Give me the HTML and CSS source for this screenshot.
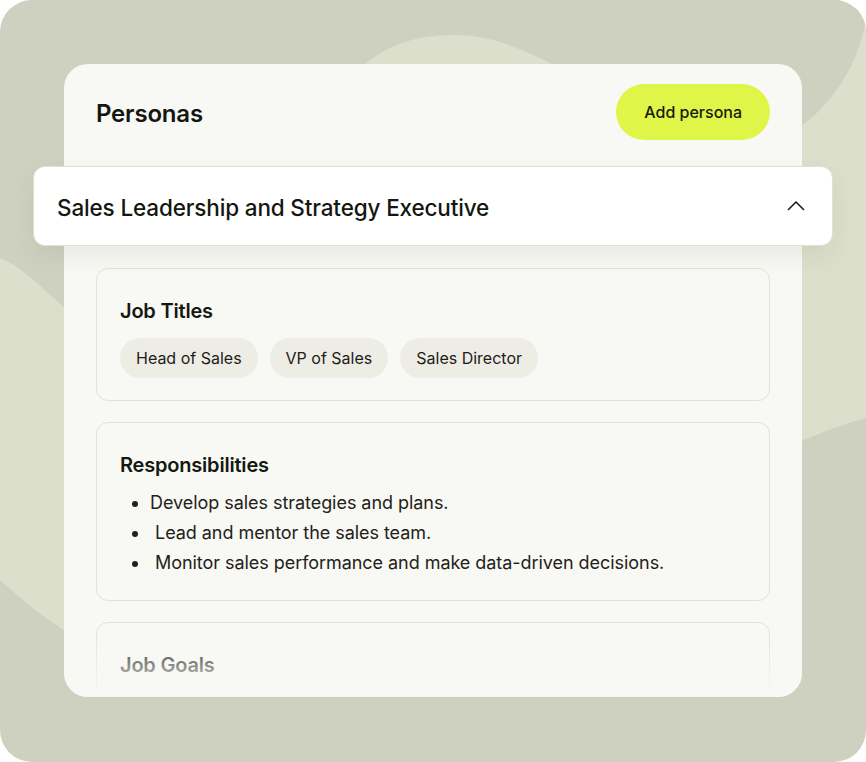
FILE: index.html
```html
<!DOCTYPE html>
<html lang="en">
<head>
<meta charset="utf-8">
<title>Personas</title>
<link rel="stylesheet" href="styles.css">
</head>
<body>
<div class="frame">
  <svg class="bg-art" width="866" height="762" viewBox="0 0 866 762" aria-hidden="true">
    <path class="bg-light" d="M0,258 C25,268 45,292 70,312 L330,100 C345,80 355,70 365,64 C395,40 425,35 455,35 C490,35 520,48 552,64 C580,80 600,100 620,120 L866,0 L866,418 C840,425 815,435 790,446 L80,640 C50,622 25,603 0,580 Z"/>
    <circle class="bg-dark" cx="702" cy="-7" r="166"/>
  </svg>
  <section class="card">
    <header class="card-head">
      <h1 class="card-title">Personas</h1>
      <button class="add-btn" type="button">Add persona</button>
    </header>
    <div class="acc-head">
      <h2 class="acc-title">Sales Leadership and Strategy Executive</h2>
      <svg class="chevron" width="24" height="24" viewBox="0 0 24 24" aria-hidden="true">
        <polyline points="4,16 12,8 20,16" fill="none" stroke="#141612" stroke-width="1.5"/>
      </svg>
    </div>
    <div class="acc-body">
      <div class="panel">
        <h3 class="panel-title">Job Titles</h3>
        <div class="chips">
          <span class="chip">Head of Sales</span>
          <span class="chip">VP of Sales</span>
          <span class="chip">Sales Director</span>
        </div>
      </div>
      <div class="panel">
        <h3 class="panel-title">Responsibilities</h3>
        <ul class="bullets">
          <li>Develop sales strategies and plans.</li>
          <li>&nbsp;Lead and mentor the sales team.</li>
          <li>&nbsp;Monitor sales performance and make data-driven decisions.</li>
        </ul>
      </div>
      <div class="panel panel-tall">
        <h3 class="panel-title">Job Goals</h3>
      </div>
    </div>
  </section>
</div>
</body>
</html>
```

FILE: styles.css
```css
* {
  box-sizing: border-box;
}

html, body {
  margin: 0;
  padding: 0;
  background: #ffffff;
}

body {
  font-family: "Inter", "Liberation Sans", sans-serif;
  color: #151811;
}

.frame {
  position: relative;
  width: 866px;
  height: 762px;
  padding: 64px;
  border-radius: 32px;
  overflow: hidden;
  background: #cfd1c0;
}

.bg-art {
  position: absolute;
  left: 0;
  top: 0;
  display: block;
}

.bg-light {
  fill: #dcdfcb;
}

.bg-dark {
  fill: #cfd1c0;
}

.card {
  position: relative;
  z-index: 1;
  width: 738px;
  height: 633px;
  border-radius: 24px;
  background: #f8f8f4;
  display: flex;
  flex-direction: column;
}

.card-head {
  display: flex;
  align-items: center;
  justify-content: space-between;
  padding: 20px 32px 0 32px;
  margin-bottom: 26px;
}

.card-title {
  margin: 0;
  padding-top: 3px;
  font-size: 24px;
  font-weight: 600;
  letter-spacing: -0.2px;
  color: #141711;
}

.add-btn {
  height: 56px;
  padding: 0 28px;
  border: none;
  border-radius: 28px;
  background: #dff548;
  font-family: inherit;
  font-size: 16px;
  font-weight: 500;
  color: #161a0e;
}

.acc-head {
  position: relative;
  z-index: 2;
  margin: 0 -31px;
  height: 80px;
  padding: 0 24px 0 23px;
  display: flex;
  align-items: center;
  justify-content: space-between;
  background: #ffffff;
  border: 1px solid #e0e0d3;
  border-radius: 12px;
  box-shadow: 0 10px 24px rgba(70, 72, 50, 0.08);
}

.acc-title {
  margin: 0;
  padding-top: 3px;
  font-size: 22.5px;
  font-weight: 500;
  letter-spacing: -0.15px;
  color: #141711;
}

.chevron {
  display: block;
}

.acc-body {
  position: relative;
  flex: 1;
  overflow: hidden;
  padding: 22px 32px 0 32px;
  display: flex;
  flex-direction: column;
  gap: 21px;
  border-radius: 0 0 24px 24px;
}

.acc-body::after {
  content: "";
  position: absolute;
  left: 0;
  right: 0;
  bottom: 0;
  height: 72px;
  background: linear-gradient(to bottom, rgba(248, 248, 244, 0) 0%, rgba(248, 248, 244, 0.45) 50%, #f8f8f4 100%);
}

.panel {
  flex-shrink: 0;
  border: 1px solid #e2e2d5;
  border-radius: 12px;
  padding: 28px 23px 22px 23px;
  background: #f8f8f4;
}

.panel-tall {
  height: 150px;
}

.panel-title {
  margin: 0;
  font-size: 20px;
  line-height: 28px;
  font-weight: 600;
  letter-spacing: -0.2px;
  color: #151811;
}

.chips {
  display: flex;
  gap: 12px;
  margin-top: 13px;
}

.chip {
  height: 40px;
  padding: 0 16px;
  display: flex;
  align-items: center;
  border-radius: 20px;
  background: #ededE5;
  font-size: 16px;
  color: #1d2018;
}

.bullets {
  margin: 9px 0 0 0;
  padding-left: 30px;
  list-style: disc;
}

.bullets li {
  font-size: 18px;
  line-height: 30px;
  letter-spacing: -0.05px;
  color: #1f2219;
}
```
